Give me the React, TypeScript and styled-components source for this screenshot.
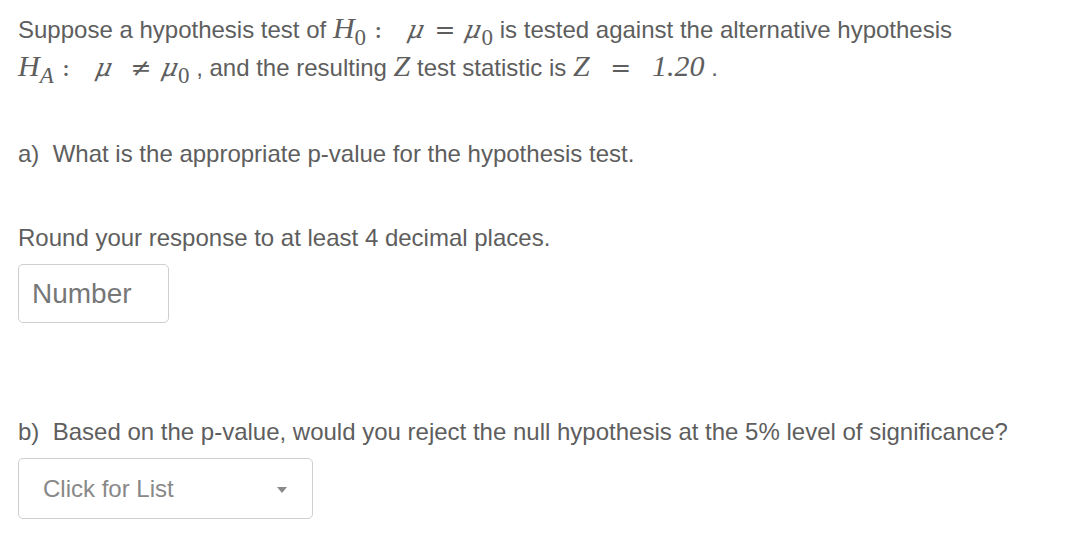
import React from "react";
import styled, { createGlobalStyle } from "styled-components";

const GlobalStyle = createGlobalStyle`
  body {
    margin: 0;
    background: #fff;
  }
`;

const Page = styled.div`
  padding: 10px 18px;
  font-family: "Liberation Sans", Arial, sans-serif;
  font-size: 24px;
  color: #5e5e5e;
`;

const Para = styled.p<{ mt?: number }>`
  margin: ${(p) => p.mt ?? 0}px 0 0 0;
  line-height: 36px;
  white-space: nowrap;
`;

const M = styled.span`
  font-family: "Liberation Serif", "Times New Roman", serif;
  font-style: italic;
  font-size: 30px;
`;

const Greek = styled.span`
  font-family: "DejaVu Serif", serif;
  font-style: italic;
  font-size: 25px;
  display: inline-block;
  transform: skewX(-12deg);
`;

const Op = styled.span<{ l?: number; r?: number }>`
  font-family: "DejaVu Serif", serif;
  font-size: 25px;
  margin: 0 ${(p) => p.r ?? 10}px 0 ${(p) => p.l ?? 10}px;
`;

const Sub = styled.sub<{ italic?: boolean }>`
  font-family: "Liberation Serif", "Times New Roman", serif;
  font-style: ${(p) => (p.italic ? "italic" : "normal")};
  font-size: 23px;
  vertical-align: -7px;
  line-height: 0;
`;

const NumberBox = styled.div`
  margin-top: 8px;
  width: 151px;
  height: 59px;
  box-sizing: border-box;
  border: 1.5px solid #cfcfcf;
  border-radius: 5px;
  display: flex;
  align-items: center;
  padding-left: 13px;
  font-size: 28px;
  color: #777;
`;

const Select = styled.div`
  margin-top: 8px;
  width: 295px;
  height: 61px;
  box-sizing: border-box;
  border: 1.5px solid #cfcfcf;
  border-radius: 5px;
  display: flex;
  align-items: center;
  justify-content: space-between;
  padding: 0 25px 0 24px;
  font-size: 24px;
  color: #888;
`;

const Caret = styled.span`
  width: 0;
  height: 0;
  border-left: 5.5px solid transparent;
  border-right: 5.5px solid transparent;
  border-top: 6px solid #8a8a8a;
  margin-top: 2px;
`;

export default function App() {
  return (
    <>
      <GlobalStyle />
      <Page>
        <Para>
          Suppose a hypothesis test of <M>H<Sub>0</Sub></M>
          <Op l={8} r={19}>:</Op> <Greek>μ</Greek>
          <Op>=</Op>
          <Greek>μ</Greek><M><Sub>0</Sub></M> is tested against the alternative hypothesis
          <br />
          <M>H<Sub italic>A</Sub></M>
          <Op l={8} r={19}>:</Op> <Greek>μ</Greek> <Op l={12} r={10}>≠</Op>
          <Greek>μ</Greek><M><Sub>0</Sub></M> , and the resulting <M>Z</M> test statistic is <M>Z</M>{" "}
          <Op l={14} r={14}>=</Op> <M>1.20</M> .
        </Para>
        <Para mt={50}>a)&nbsp; What is the appropriate p-value for the hypothesis test.</Para>
        <Para mt={48}>Round your response to at least 4 decimal places.</Para>
        <NumberBox>Number</NumberBox>
        <Para mt={91}>b)&nbsp; Based on the p-value, would you reject the null hypothesis at the 5% level of significance?</Para>
        <Select>
          Click for List
          <Caret />
        </Select>
      </Page>
    </>
  );
}
